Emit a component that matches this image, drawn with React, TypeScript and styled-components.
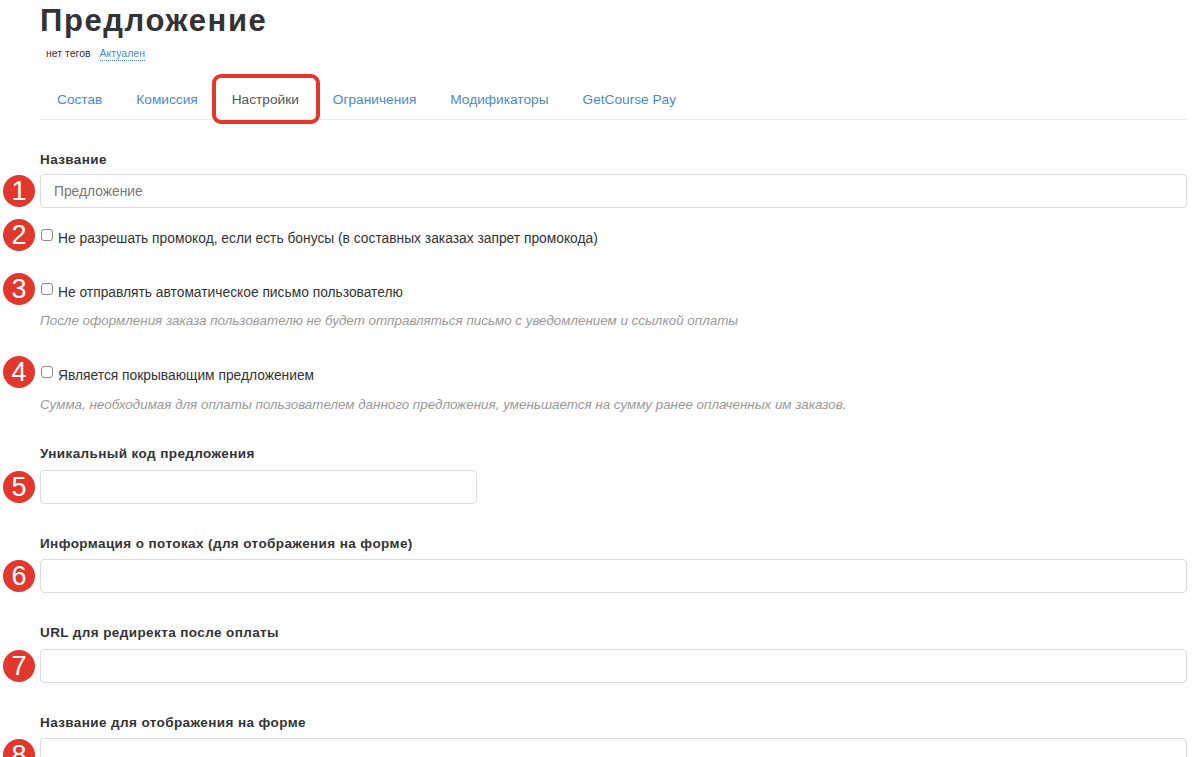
import styled, { createGlobalStyle } from "styled-components";

const GlobalStyle = createGlobalStyle`
  body {
    margin: 0;
    background: #fff;
    font-family: "Liberation Sans", Arial, sans-serif;
    color: #333;
  }
`;

const tabs: string[] = ["Состав", "Комиссия", "Настройки", "Ограничения", "Модификаторы", "GetCourse Pay"];

function App(): JSX.Element {
  return (
    <Page>
      <GlobalStyle />
      <Header>
        <Title>Предложение</Title>
        <Tags>
          <span>нет тегов</span>
          <StatusLink>Актуален</StatusLink>
        </Tags>
        <TabBar>
          {tabs.map((t) => (
            <Tab key={t} active={t === "Настройки"}>{t}</Tab>
          ))}
        </TabBar>
      </Header>

      <Form>
        <Label gap={32}>Название</Label>
        <Row gap={6}>
          <Gutter><Marker>1</Marker></Gutter>
          <Input defaultValue="" placeholder="Предложение" />
        </Row>

        <Row gap={14}>
          <Gutter><Marker>2</Marker></Gutter>
          <Check>
            <Box type="checkbox" />
            <CheckText>Не разрешать промокод, если есть бонусы (в составных заказах запрет промокода)</CheckText>
          </Check>
        </Row>

        <Row gap={28}>
          <Gutter><Marker>3</Marker></Gutter>
          <Check>
            <Box type="checkbox" />
            <CheckText>Не отправлять автоматическое письмо пользователю</CheckText>
          </Check>
        </Row>
        <Hint gap={11}>После оформления заказа пользователю не будет отправляться письмо с уведомлением и ссылкой оплаты</Hint>

        <Row gap={30}>
          <Gutter><Marker>4</Marker></Gutter>
          <Check>
            <Box type="checkbox" />
            <CheckText>Является покрывающим предложением</CheckText>
          </Check>
        </Row>
        <Hint gap={12}>Сумма, необходимая для оплаты пользователем данного предложения, уменьшается на сумму ранее оплаченных им заказов.</Hint>

        <Label gap={33}>Уникальный код предложения</Label>
        <Row gap={8}>
          <Gutter><Marker>5</Marker></Gutter>
          <Input short />
        </Row>

        <Label>Информация о потоках (для отображения на форме)</Label>
        <Row gap={7}>
          <Gutter><Marker>6</Marker></Gutter>
          <Input />
        </Row>

        <Label>URL для редиректа после оплаты</Label>
        <Row gap={8}>
          <Gutter><Marker>7</Marker></Gutter>
          <Input />
        </Row>

        <Label>Название для отображения на форме</Label>
        <Row gap={7}>
          <Gutter><Marker>8</Marker></Gutter>
          <Input />
        </Row>
      </Form>
    </Page>
  );
}

const Page = styled.div`
  width: 1193px;
  height: 757px;
  overflow: hidden;
  padding-right: 6px;
  box-sizing: border-box;
`;

const Header = styled.div`
  padding-left: 40px;
`;

const Title = styled.h1`
  margin: 4px 0 0;
  font-size: 31px;
  line-height: 34px;
  font-weight: 700;
  letter-spacing: 1.6px;
  color: #333;
`;

const Tags = styled.div`
  margin-top: 8px;
  padding-left: 6px;
  font-size: 10.5px;
  line-height: 14px;
  display: flex;
  gap: 9px;
  color: #333;
`;

const StatusLink = styled.span`
  color: #4a8bc9;
  border-bottom: 1px dotted #4a8bc9;
`;

const TabBar = styled.div`
  margin-top: 18px;
  display: flex;
  border-bottom: 1px solid #e8e8e8;
`;

const Tab = styled.div<{ active?: boolean }>`
  position: relative;
  height: 40px;
  padding: 0 17px;
  display: flex;
  align-items: center;
  font-size: 13.7px;
  color: ${(p) => (p.active ? "#555" : "#4a8bc9")};
  ${(p) =>
    p.active &&
    `
    &::after {
      content: "";
      position: absolute;
      top: -5px;
      bottom: -5px;
      left: -3px;
      right: -4px;
      border: 4px solid #e2372c;
      border-radius: 9px;
    }
  `}
`;

const Form = styled.div`
  display: flex;
  flex-direction: column;
`;

const Label = styled.div<{ gap?: number }>`
  margin: ${(p) => p.gap ?? 32}px 0 0 40px;
  font-size: 13.5px;
  line-height: 16px;
  font-weight: 700;
  letter-spacing: 0.4px;
  color: #333;
`;

const Row = styled.div<{ gap: number }>`
  margin-top: ${(p) => p.gap}px;
  display: flex;
  align-items: center;
`;

const Gutter = styled.div`
  width: 40px;
  flex-shrink: 0;
  display: flex;
  justify-content: flex-start;
  padding-left: 3px;
  box-sizing: border-box;
`;

const Marker = styled.div`
  width: 32px;
  height: 32px;
  border-radius: 50%;
  background: #e2372c;
  color: #fff;
  font-size: 27px;
  font-weight: 400;
  display: flex;
  align-items: center;
  justify-content: center;
  margin: -9px 0;
`;

const Input = styled.input<{ short?: boolean }>`
  box-sizing: border-box;
  width: ${(p) => (p.short ? "437px" : "100%")};
  height: 34px;
  margin: 0;
  border: 1px solid #dcdcdc;
  border-radius: 4px;
  padding: 0 13px;
  font-family: "Liberation Sans", Arial, sans-serif;
  font-size: 13.8px;
  color: #333;
  outline: none;
  &::placeholder {
    color: #777;
  }
`;

const Check = styled.label`
  display: flex;
  align-items: center;
  height: 26px;
`;

const Box = styled.input`
  appearance: none;
  width: 12px;
  height: 12px;
  margin: 0 5px 0 1px;
  border: 1px solid #888;
  border-radius: 3px;
  background: #fff;
  box-sizing: border-box;
`;

const CheckText = styled.span`
  margin-top: 8px;
  font-size: 13.8px;
  line-height: 18px;
  color: #333;
`;

const Hint = styled.div<{ gap: number }>`
  margin: ${(p) => p.gap}px 0 0 40px;
  font-size: 13.4px;
  line-height: 16px;
  font-style: italic;
  color: #999;
`;

export default App;
